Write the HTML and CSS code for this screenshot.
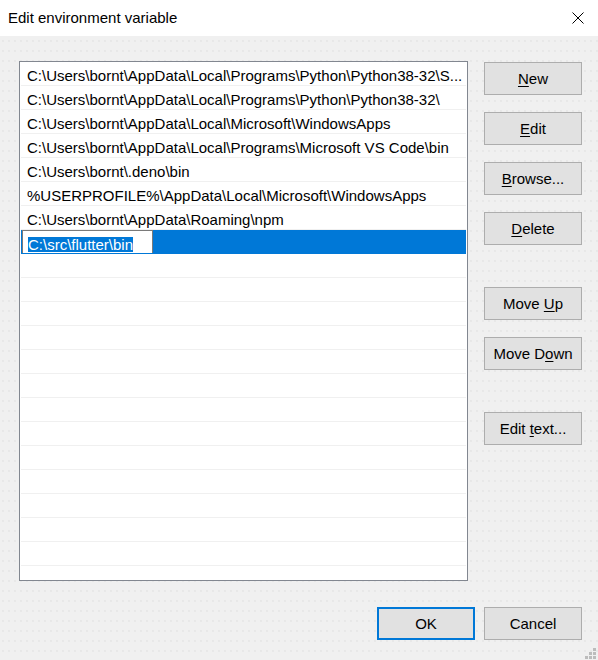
FILE: index.html
```html
<!DOCTYPE html>
<html lang="en">
<head>
    <meta charset="UTF-8">
    <meta name="viewport" content="width=device-width, initial-scale=1.0">
    <title>Edit environment variable</title>
    <link rel="stylesheet" href="styles.css">
</head>
<body>
<div class="dialogClass">
    <div class="titleBarClass">
        <div class="titleTextClass">Edit environment variable</div>
        <div class="closeButtonClass">
            <svg width="12" height="12" viewBox="0 0 12 12">
                <path d="M0.5 0.5 L11.5 11.5 M11.5 0.5 L0.5 11.5" stroke="#000" stroke-width="1" fill="none"/>
            </svg>
        </div>
    </div>

    <div class="clientClass">
        <div class="contentClass">
            <div class="pathListClass">
                <div class="pathRowClass">C:\Users\bornt\AppData\Local\Programs\Python\Python38-32\S...</div>
                <div class="pathRowClass">C:\Users\bornt\AppData\Local\Programs\Python\Python38-32\</div>
                <div class="pathRowClass">C:\Users\bornt\AppData\Local\Microsoft\WindowsApps</div>
                <div class="pathRowClass">C:\Users\bornt\AppData\Local\Programs\Microsoft VS Code\bin</div>
                <div class="pathRowClass">C:\Users\bornt\.deno\bin</div>
                <div class="pathRowClass">%USERPROFILE%\AppData\Local\Microsoft\WindowsApps</div>
                <div class="pathRowClass">C:\Users\bornt\AppData\Roaming\npm</div>
                <div class="pathRowClass selectedRowClass">
                    <div class="editBoxClass"><span class="selectedTextClass">C:\src\flutter\bin</span></div>
                </div>
                <div class="pathRowClass"></div>
                <div class="pathRowClass"></div>
                <div class="pathRowClass"></div>
                <div class="pathRowClass"></div>
                <div class="pathRowClass"></div>
                <div class="pathRowClass"></div>
                <div class="pathRowClass"></div>
                <div class="pathRowClass"></div>
                <div class="pathRowClass"></div>
                <div class="pathRowClass"></div>
                <div class="pathRowClass"></div>
                <div class="pathRowClass"></div>
                <div class="pathRowClass"></div>
                <div class="pathRowClass"></div>
            </div>

            <div class="sideButtonsClass">
                <div class="buttonClass"><span><u>N</u>ew</span></div>
                <div class="buttonClass"><span><u>E</u>dit</span></div>
                <div class="buttonClass"><span><u>B</u>rowse...</span></div>
                <div class="buttonClass"><span><u>D</u>elete</span></div>
                <div class="buttonClass groupStartClass"><span>Move <u>U</u>p</span></div>
                <div class="buttonClass"><span>Move D<u>o</u>wn</span></div>
                <div class="buttonClass groupStartClass"><span>Edit <u>t</u>ext...</span></div>
            </div>
        </div>

        <div class="footerClass">
            <div class="buttonClass defaultButtonClass"><span>OK</span></div>
            <div class="buttonClass"><span>Cancel</span></div>
        </div>

        <svg class="sizeGripClass" width="12" height="12" viewBox="0 0 12 12">
            <rect x="8" y="0" width="3" height="3" fill="#bcbcbc"/>
            <rect x="4" y="4" width="3" height="3" fill="#bcbcbc"/>
            <rect x="8" y="4" width="3" height="3" fill="#bcbcbc"/>
            <rect x="0" y="8" width="3" height="3" fill="#bcbcbc"/>
            <rect x="4" y="8" width="3" height="3" fill="#bcbcbc"/>
            <rect x="8" y="8" width="3" height="3" fill="#bcbcbc"/>
        </svg>
    </div>
</div>
</body>
</html>
```

FILE: styles.css
```css
*{
    box-sizing: border-box;
}
body{
    margin: 0;
    font-family: "Segoe UI", "Liberation Sans", Arial, sans-serif;
    font-size: 15px;
    color: #000;
}
.dialogClass{
    width: 598px;
    height: 660px;
    display: flex;
    flex-direction: column;
    overflow: hidden;
}
.titleBarClass{
    height: 36px;
    background: #fff;
    display: flex;
    align-items: center;
    justify-content: space-between;
    padding: 0 14px 0 8px;
}
.titleTextClass{
    padding-bottom: 1px;
}
.closeButtonClass{
    width: 12px;
    height: 12px;
    margin-bottom: 1px;
}
.closeButtonClass svg{
    display: block;
}
.clientClass{
    flex: 1;
    position: relative;
    background-color: #f0f0f0;
    background-image: radial-gradient(circle, #e7e7e7 0.7px, transparent 1.2px);
    background-size: 6px 10px;
    padding: 25px 16px 0 19px;
}
.contentClass{
    display: flex;
    gap: 16px;
}
.pathListClass{
    width: 449px;
    height: 520px;
    border: 1px solid #828790;
    background: #fff;
    overflow: hidden;
}
.pathRowClass{
    height: 24px;
    margin: 0 1px;
    border-bottom: 1px solid #f0f0f0;
    padding: 3px 0 0 6px;
    line-height: 21px;
    white-space: nowrap;
    overflow: hidden;
}
.selectedRowClass{
    background: #0078d7;
    padding: 0 0 0 1px;
    border-bottom-color: #0078d7;
}
.editBoxClass{
    width: 131px;
    height: 24px;
    border: 1px solid #7a7a7a;
    background: #fff;
    padding: 6px 0 0 5px;
    line-height: 14px;
}
.selectedTextClass{
    background: #0078d7;
    color: #fff;
    display: inline-block;
    height: 15px;
    line-height: 15px;
}
.sideButtonsClass{
    display: flex;
    flex-direction: column;
    gap: 17px;
    padding-top: 1px;
}
.buttonClass{
    width: 98px;
    height: 33px;
    border: 1px solid #adadad;
    background: #e1e1e1;
    display: flex;
    align-items: center;
    justify-content: center;
    white-space: nowrap;
}
.buttonClass u{
    text-decoration-thickness: 1px;
    text-underline-offset: 2px;
}
.groupStartClass{
    margin-top: 25px;
}
.footerClass{
    display: flex;
    justify-content: flex-end;
    gap: 9px;
    margin-top: 26px;
}
.defaultButtonClass{
    border: 2px solid #0078d7;
}
.sizeGripClass{
    position: absolute;
    right: 1px;
    bottom: 0;
}
```
